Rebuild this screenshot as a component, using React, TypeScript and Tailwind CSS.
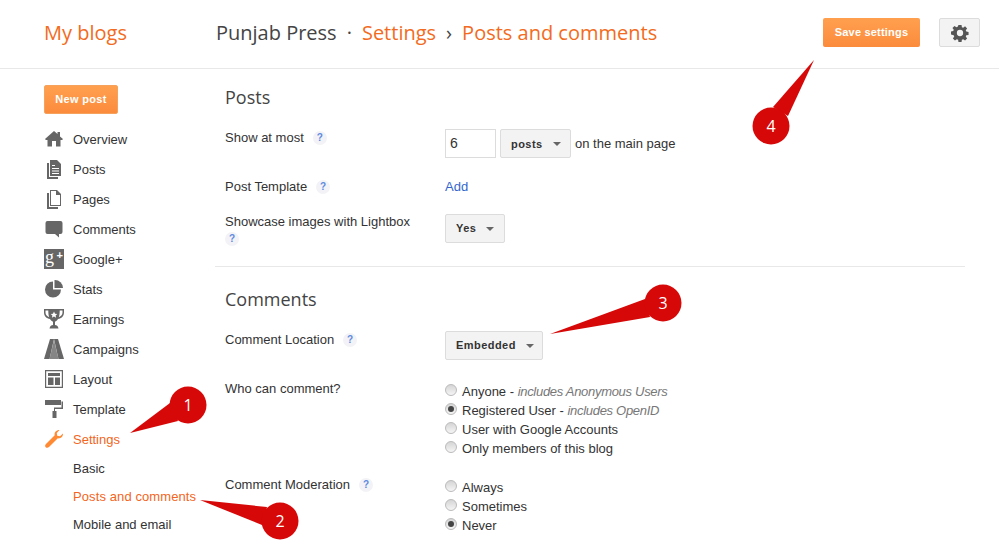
import { ReactNode } from "react";

const sans = "font-['Liberation_Sans',Arial,sans-serif]";
const display = "font-['Open_Sans',sans-serif]";

function Home() {
  return (
    <svg viewBox="0 0 20 20" className="w-5 h-5 fill-[#666]">
      <path d="M1 10 10 2l3.5 3.1V3H16v4.4L19 10l-.9 1H16.500v6.500H12V12H8v5.500H3.500V11H1.900z" />
    </svg>
  );
}

function PostsIcon() {
  return (
    <svg viewBox="0 0 20 20" className="w-5 h-5 fill-[#666]">
      <path d="M6 1h7l4 4v12H6zM8 6h3v1H8zm0 3h7v1H8zm0 2.500h7v1H8zm0 2.500h7v1H8z" fillRule="evenodd" />
      <path d="M3 4h2v14h9v2H3z" />
    </svg>
  );
}

function PagesIcon() {
  return (
    <svg viewBox="0 0 20 20" className="w-5 h-5 fill-[#666]">
      <path d="M6 1h7l4 4v12H6zM7 2v14h9V6h-4V2z" fillRule="evenodd" />
      <path d="M3 4h2v14h9v2H3z" />
    </svg>
  );
}

function CommentsIcon() {
  return (
    <svg viewBox="0 0 20 20" className="w-5 h-5 fill-[#666]">
      <path d="M3.500 2h13A2 2 0 0 1 18.500 4v9a2 2 0 0 1-2 2H15v3.500L11 15H3.500a2 2 0 0 1-2-2V4a2 2 0 0 1 2-2z" />
    </svg>
  );
}

function GooglePlus() {
  return (
    <div className="relative w-5 h-5 bg-[#666]">
      <span className="absolute left-[1px] top-0 text-[18px] leading-[17px] text-white font-['Liberation_Serif',serif]">
        g
      </span>
      <span className="absolute right-[1px] top-[1px] text-[11px] leading-[10px] font-bold text-white">+</span>
    </div>
  );
}

function Stats() {
  return (
    <svg viewBox="0 0 20 20" className="w-5 h-5 fill-[#666]">
      <path d="M9 2.500V10.500h8A8 8 0 1 1 9 2.500z" />
      <path d="M10.500 1A8 8 0 0 1 19 9h-8.500z" />
    </svg>
  );
}

function Earnings() {
  return (
    <svg viewBox="0 0 20 20" className="w-5 h-5 fill-[#666]">
      <path d="M0 0h20v3.500c0 3.500-2.500 6-6 6.500-.8 1.500-2 2.300-3 2.700V16c1.500.2 3 .8 3.500 3.500h-9C6 16.800 7.500 16.200 9 16v-3.300C8 12.300 6.800 11.500 6 10 2.500 9.500 0 7 0 3.500zM1.500 1.500v2c0 2 1.300 3.800 3.700 4.700C4.500 6.500 4.300 4 4.300 1.500zm17 0h-2.800c0 2.500-.2 5-.9 6.700 2.400-.9 3.700-2.700 3.700-4.700zM10 2.500l-1 2.200-2.300.2 1.700 1.600-.5 2.300 2.100-1.200 2.100 1.200-.5-2.300 1.700-1.600-2.300-.2z" fillRule="evenodd" />
    </svg>
  );
}

function Campaigns() {
  return (
    <svg viewBox="0 0 20 20" className="w-5 h-5 fill-[#666]">
      <path d="M6 0h4L5.500 20H0z" />
      <path d="M10 0h4l6 20h-5.500z" />
      <path d="M10 1 14.500 20h-9z" fillOpacity="0.8" />
    </svg>
  );
}

function LayoutIcon() {
  return (
    <svg viewBox="0 0 20 20" className="w-5 h-5 fill-[#666]">
      <path d="M1 1h18v18H1zM2.200 2.200v15.600h15.600V2.200zM4 4h12v3H4zm0 4.500h5.500V16H4zm7 0h5V16h-5z" fillRule="evenodd" />
    </svg>
  );
}

function TemplateIcon() {
  return (
    <svg viewBox="0 0 20 20" className="w-5 h-5 fill-[#666]">
      <path d="M1 1h16v5H1z" />
      <path d="M17.500 2.500H19V10h-8v2h1.500v7h-4v-7H10V8.500h7.500z" />
    </svg>
  );
}

function Wrench() {
  return (
    <svg viewBox="0 0 20 20" className="w-5 h-5 fill-[#ff8a33]">
      <path d="M19 4.500c.3 2.800-2.300 5.400-5.200 4.800L5 18c-1 1-2.500 1-3.300.2S.9 16 2 15l8.700-8.700C10 3.400 12.600.9 15.500 1.100L12.800 4l.4 2.800 2.800.4z" />
    </svg>
  );
}

function Gear() {
  return (
    <svg viewBox="0 0 20 20" className="w-[18px] h-[18px] fill-[#555]">
      <path
        fillRule="evenodd"
        d="M8.300 1h3.400l.4 2.500 1.400.6 2.100-1.500 2.300 2.300-1.500 2.100.6 1.400 2.500.4v3.400l-2.500.4-.6 1.400 1.500 2.100-2.300 2.300-2.100-1.500-1.400.6-.4 2.500H8.300l-.4-2.500-1.400-.6-2.100 1.500-2.300-2.300 1.500-2.100-.6-1.400L0 11.700V8.300l2.500-.4.6-1.400L1.600 4.400l2.300-2.300L6 3.600l1.400-.6zM10 6.500a3.500 3.500 0 1 0 0 7 3.500 3.500 0 0 0 0-7z"
      />
    </svg>
  );
}

function Help() {
  return (
    <span className="inline-flex w-[14px] h-[14px] rounded-full bg-[#f3f3f7] items-center justify-center text-[10px] font-bold leading-none text-[#5f8ae0]">
      ?
    </span>
  );
}

function SelectButton({ label, width }: { label: string; width: string }) {
  return (
    <div className={`${width} h-[29px] flex items-center gap-[10px] pl-[10px] bg-[#f3f3f3] border border-[#dcdcdc] rounded-[2px] text-[11px] font-bold tracking-[0.45px] text-[#333]`}>
      <span className="mt-[1px]">{label}</span>
      <span className="w-0 h-0 mt-[1px] border-x-[4px] border-x-transparent border-t-[4px] border-t-[#666]" />
    </div>
  );
}

function Radio({ checked, children }: { checked?: boolean; children: ReactNode }) {
  return (
    <div className="h-[19px] flex items-center gap-[5px]">
      <span className="w-3 h-3 -mt-[3px] rounded-full border border-[#bbb] bg-gradient-to-b from-[#d5d5d5] to-[#f5f5f5] flex items-center justify-center">
        {checked && <span className="w-[6px] h-[6px] rounded-full bg-[#444]" />}
      </span>
      <span className="whitespace-nowrap mt-[1px]">{children}</span>
    </div>
  );
}

function Note({ children }: { children: ReactNode }) {
  return <span className="italic tracking-[-0.3px] text-[#777]">{children}</span>;
}

const navItems = [
  { label: "Overview", icon: <Home /> },
  { label: "Posts", icon: <PostsIcon /> },
  { label: "Pages", icon: <PagesIcon /> },
  { label: "Comments", icon: <CommentsIcon /> },
  { label: "Google+", icon: <GooglePlus /> },
  { label: "Stats", icon: <Stats /> },
  { label: "Earnings", icon: <Earnings /> },
  { label: "Campaigns", icon: <Campaigns /> },
  { label: "Layout", icon: <LayoutIcon /> },
  { label: "Template", icon: <TemplateIcon /> },
];

function Sidebar() {
  return (
    <aside className="w-[215px] shrink-0 pl-[44px] pt-4">
      <div className="w-[74px] h-[29px] flex items-center justify-center rounded-[2px] border border-[#f6a15c] bg-gradient-to-b from-[#ffa04f] to-[#fb8b3c] text-[11px] font-bold tracking-[0.3px] text-white">
        New post
      </div>
      <nav className="mt-[10px]">
        {navItems.map((item) => (
          <div key={item.label} className="h-[30px] flex items-center gap-[9px]">
            {item.icon}
            <span className="mt-[2px]">{item.label}</span>
          </div>
        ))}
        <div className="h-[30px] flex items-center gap-[9px] text-[#f26522]">
          <Wrench />
          <span className="mt-[2px]">Settings</span>
        </div>
      </nav>
      <div className="pl-[29px] mt-[1px]">
        <div className="h-[28px] flex items-center">Basic</div>
        <div className="h-[28px] flex items-center tracking-[0.1px] text-[#f26522] whitespace-nowrap">Posts and comments</div>
        <div className="h-[28px] flex items-center whitespace-nowrap">Mobile and email</div>
      </div>
    </aside>
  );
}

function Callouts() {
  const items = [
    { n: "1", cx: 188, cy: 405, points: "130,433 170,403 178,421" },
    { n: "2", cx: 280, cy: 521, points: "200,500 267,507 262,525" },
    { n: "3", cx: 663, cy: 303, points: "550,334 645,299 650,317" },
    { n: "4", cx: 771, cy: 126, points: "814,60 773,107 788,116" },
  ];
  return (
    <svg width="999" height="547" className="absolute inset-0 pointer-events-none">
      {items.map((c) => (
        <g key={c.n} fill="#d60808">
          <polygon points={c.points} />
          <circle cx={c.cx} cy={c.cy} r="18.500" />
          <text x={c.cx} y={c.cy + 6} textAnchor="middle" fill="#fff" fontSize="16" fontFamily="Open Sans, sans-serif">
            {c.n}
          </text>
        </g>
      ))}
    </svg>
  );
}

export default function App() {
  return (
    <div className={`relative w-[999px] h-[547px] overflow-hidden bg-white text-[13px] text-[#333] ${sans}`}>
      <header className={`h-[69px] border-b border-[#e8e8e8] flex items-center pl-[44px] pr-[19px] pb-[2px] text-[20px] ${display}`}>
        <span className="w-[172px] text-[#f26b21]">My blogs</span>
        <span className="text-[#444]">Punjab Press</span>
        <span className="mx-[10px] text-[#444]">·</span>
        <span className="text-[#f26b21]">Settings</span>
        <span className="mx-[10px] text-[#444]">›</span>
        <span className="text-[#f26b21]">Posts and comments</span>
        <div className="ml-auto flex items-center gap-[19px] -mt-[1px]">
          <div className={`w-[97px] h-[29px] flex items-center justify-center rounded-[2px] bg-gradient-to-b from-[#ffa04f] to-[#fb8b3c] text-[11px] font-bold tracking-[0.2px] text-white ${sans}`}>
            Save settings
          </div>
          <div className="w-[41px] h-[29px] flex items-center justify-center rounded-[2px] bg-[#f3f3f3] border border-[#dcdcdc]">
            <Gear />
          </div>
        </div>
      </header>

      <div className="flex">
        <Sidebar />
        <main className="w-[750px]">
          <section className="px-[10px] pt-[16px] pb-[20px] border-b border-[#e8e8e8]">
            <h2 className={`text-[18px] leading-[24px] text-[#444] ${display}`}>Posts</h2>
            <div className="mt-[20px] grid grid-cols-[220px_1fr] items-start">
              <div className="flex items-center gap-[9px] h-[16px] mt-[1px]">
                <span>Show at most</span>
                <Help />
              </div>
              <div className="flex items-center gap-[4px] h-[29px]">
                <div className="w-[51px] h-[29px] border border-[#dcdcdc] flex items-center pl-[4px] text-[14px]">6</div>
                <SelectButton label="posts" width="w-[71px]" />
                <span className="whitespace-nowrap">on the main page</span>
              </div>
            </div>
            <div className="mt-[19px] grid grid-cols-[220px_1fr] items-center">
              <div className="flex items-center gap-[9px]">
                <span>Post Template</span>
                <Help />
              </div>
              <span className="text-[#3366cc]">Add</span>
            </div>
            <div className="mt-[17px] grid grid-cols-[220px_1fr] items-start">
              <div className="leading-[16px]">
                <div>Showcase images with Lightbox</div>
                <Help />
              </div>
              <div className="flex">
                <SelectButton label="Yes" width="w-[60px]" />
              </div>
            </div>
          </section>

          <section className="px-[10px] pt-[20px]">
            <h2 className={`text-[18px] leading-[24px] text-[#444] ${display}`}>Comments</h2>
            <div className="mt-[20px] grid grid-cols-[220px_1fr] items-start">
              <div className="flex items-center gap-[9px] h-[16px] mt-[1px]">
                <span>Comment Location</span>
                <Help />
              </div>
              <div className="flex">
                <SelectButton label="Embedded" width="w-[98px]" />
              </div>
            </div>
            <div className="mt-[20px] grid grid-cols-[220px_1fr] items-start">
              <div className="-mt-[1px]">Who can comment?</div>
              <div className="pt-[2px]">
                <Radio>
                  Anyone - <Note>includes Anonymous Users</Note>
                </Radio>
                <Radio checked>
                  Registered User - <Note>includes OpenID</Note>
                </Radio>
                <Radio>User with Google Accounts</Radio>
                <Radio>Only members of this blog</Radio>
              </div>
            </div>
            <div className="mt-[20px] grid grid-cols-[220px_1fr] items-start">
              <div className="flex items-center gap-[9px] h-[16px] -mt-[1px]">
                <span>Comment Moderation</span>
                <Help />
              </div>
              <div>
                <Radio>Always</Radio>
                <Radio>Sometimes</Radio>
                <Radio checked>Never</Radio>
              </div>
            </div>
          </section>
        </main>
      </div>
      <Callouts />
    </div>
  );
}
